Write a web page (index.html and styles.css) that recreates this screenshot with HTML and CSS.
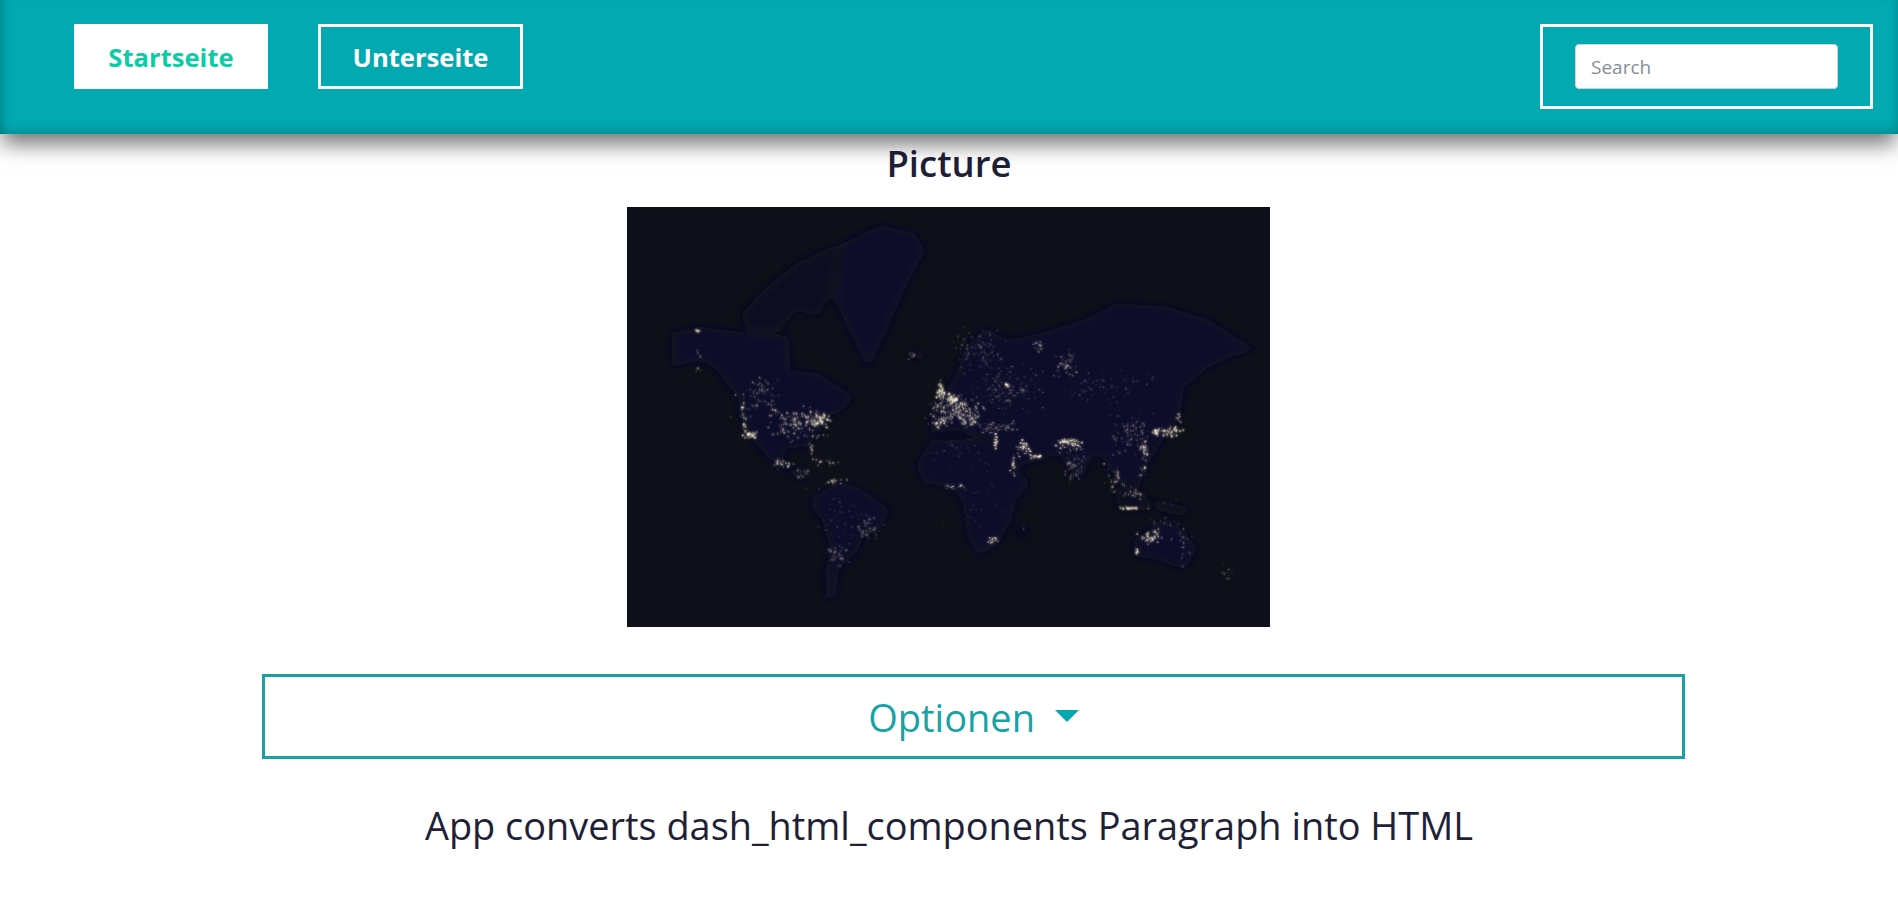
FILE: index.html
```html
<!DOCTYPE html>
<html lang="de">
<head>
    <meta charset="UTF-8">
    <meta name="viewport" content="width=device-width, initial-scale=1.0">
    <title>Startseite</title>
    <link rel="stylesheet" href="styles.css">
</head>
<body>
    <nav class="navbar">
        <div class="nav-links">
            <a class="nav-btn nav-btn-active" href="#">Startseite</a>
            <a class="nav-btn" href="#">Unterseite</a>
        </div>
        <form class="search-box">
            <input class="search-input" type="text" placeholder="Search">
        </form>
    </nav>

    <main class="content">
        <h3 class="picture-title">Picture</h3>

        <div class="picture">
            <!-- viewBox ist in den Koordinaten der Vorlage, nicht in Pixeln -->
            <svg id="world-map" viewBox="17 21 1527 1260" preserveAspectRatio="none" role="img" aria-label="World map at night">
                <defs>
                    <filter id="soft" x="-5%" y="-5%" width="110%" height="110%">
                        <feGaussianBlur stdDeviation="13"/>
                    </filter>
                    <filter id="glow" x="-5%" y="-5%" width="110%" height="110%">
                        <feGaussianBlur stdDeviation="3"/>
                    </filter>
                </defs>
                <rect x="17" y="21" width="1527" height="1260" fill="#0e1019"/>
                <g class="land" filter="url(#soft)">
                    <polygon points="125,400 190,380 280,395 310,400 400,410 405,510 470,520 520,560 555,590 530,630 495,650 470,690 450,740 455,755 440,740 400,745 385,770 395,800 430,815 450,840 435,845 395,815 350,770 310,710 285,640 280,590 230,510 190,480 125,500"/>
                    <polygon class="land-faint" points="290,340 340,270 420,190 520,130 500,280 470,350 420,330 380,390 300,390"/>
                    <polygon points="530,130 620,75 700,100 725,150 680,260 630,400 590,510 560,430 510,300"/>
                    <polygon class="land-faint" points="680,460 720,450 720,475 690,480"/>
                    <polygon points="460,890 520,845 560,860 600,890 640,930 620,980 580,1010 560,1060 520,1110 510,1210 490,1190 490,1100 500,1040 480,960 455,920"/>
                    <polygon points="705,790 740,720 840,720 900,730 930,790 975,850 940,900 930,960 900,1030 850,1070 825,1000 815,910 790,860 720,850"/>
                    <polygon class="land-faint" points="950,980 970,970 960,1020 945,1020"/>
                    <polygon points="740,640 760,600 800,520 820,440 870,385 920,420 1000,400 1100,360 1180,310 1300,320 1400,360 1510,450 1450,470 1400,500 1340,560 1330,650 1290,720 1250,800 1230,870 1180,840 1150,780 1130,750 1090,850 1040,760 1000,780 940,800 880,720 800,690 740,700"/>
                    <polygon class="land-faint" points="1170,860 1250,880 1260,930 1190,930"/>
                    <polygon class="land-faint" points="1270,900 1350,920 1340,950 1280,930"/>
                    <polygon points="1220,1020 1290,960 1340,990 1370,1050 1340,1110 1280,1080 1225,1070"/>
                </g>
                <g id="lights-glow" filter="url(#glow)"></g>
                <g id="lights"></g>
            </svg>
        </div>

        <button class="options-btn" type="button">Optionen <span class="caret"></span></button>

        <p class="info-text">App converts dash_html_components Paragraph into HTML</p>
    </main>

    <script src="map.js"></script>
</body>
</html>
```

FILE: styles.css
```css
body {
    margin: 0;
    background-color: #ffffff;
    color: #211f38;
    font-family: "Open Sans", "Noto Sans", sans-serif;
    overflow: hidden;
}

.navbar {
    display: flex;
    justify-content: space-between;
    align-items: flex-start;
    height: 134px;
    box-sizing: border-box;
    padding: 24px 25px 0 74px;
    background-color: #02a9b1;
    box-shadow: inset 0 -9px 14px -8px rgba(0, 0, 0, 0.22), inset 9px 0 10px -7px rgba(0, 0, 0, 0.2), inset -9px 0 10px -7px rgba(0, 0, 0, 0.1), 0 12px 20px -2px rgba(0, 0, 0, 0.55);
    position: relative;
}

.nav-links {
    display: flex;
    gap: 50px;
}

.nav-btn {
    display: block;
    height: 65px;
    box-sizing: border-box;
    padding-top: 1px;
    border: 3px solid #ffffff;
    color: #ffffff;
    font-size: 25.6px;
    font-weight: 700;
    line-height: 59px;
    text-align: center;
    text-decoration: none;
    width: 205px;
}

.nav-btn-active {
    width: 194px;
    background-color: #ffffff;
    color: #0bcda5;
}

.search-box {
    box-sizing: border-box;
    width: 333px;
    height: 85px;
    padding: 17px 32px;
    border: 3px solid #ffffff;
}

.search-input {
    display: block;
    width: 100%;
    height: 45px;
    box-sizing: border-box;
    padding: 6px 15px;
    border: 1px solid #ced4da;
    border-radius: 4px;
    font-family: inherit;
    font-size: 19px;
}

.search-input::placeholder {
    color: #868e96;
}

.content {
    text-align: center;
}

.picture-title {
    margin: 0;
    padding-top: 4px;
    height: 69px;
    box-sizing: border-box;
    font-size: 36.5px;
    font-weight: 600;
    line-height: 51px;
}

.picture {
    width: 643px;
    height: 420px;
    margin: 4px 0 0 627px;
}

.picture svg {
    display: block;
    width: 100%;
    height: 100%;
}

.land polygon {
    fill: #0f102b;
}

.land .land-faint {
    fill: #0e1021;
}

.options-btn {
    display: block;
    width: 1423px;
    height: 85px;
    margin: 47px 0 0 262px;
    box-sizing: border-box;
    border: 3px solid #17a2a6;
    background-color: #ffffff;
    color: #17a2a6;
    font-family: inherit;
    font-size: 38px;
    cursor: pointer;
}

.caret {
    display: inline-block;
    margin-left: 10px;
    vertical-align: 10px;
    border-top: 12px solid #02a9b1;
    border-left: 12px solid transparent;
    border-right: 12px solid transparent;
}

.info-text {
    margin: 40px 0 0;
    font-size: 37.9px;
    line-height: 52px;
}
```

FILE: map.js
```js
// Stadtlichter der Weltkarte, x/y wie im viewBox der Karte
// [x, y, streuung x, streuung y, anzahl, helligkeit]
const clusters = [
    [430, 670, 50, 40, 150, 0.8], [475, 660, 18, 14, 45, 0.9], [295, 650, 5, 40, 30, 0.9],
    [310, 705, 14, 7, 30, 1], [455, 745, 3, 12, 12, 0.8], [330, 600, 45, 45, 55, 0.6],
    [330, 555, 30, 20, 22, 0.6], [385, 790, 18, 10, 28, 0.8], [440, 822, 20, 14, 18, 0.6],
    [490, 790, 28, 9, 18, 0.7], [510, 845, 22, 6, 20, 0.8], [540, 950, 55, 75, 55, 0.4],
    [590, 985, 25, 25, 32, 0.7], [520, 1060, 25, 25, 30, 0.6], [185, 393, 4, 2, 5, 1],
    [190, 465, 5, 8, 4, 0.7], [185, 510, 5, 6, 4, 0.7], [690, 465, 12, 8, 9, 0.6],
    [765, 572, 8, 20, 42, 1], [790, 595, 14, 10, 38, 1], [800, 632, 42, 26, 160, 0.8],
    [760, 665, 20, 14, 42, 0.8], [830, 660, 14, 12, 30, 0.9], [850, 450, 40, 50, 100, 0.45],
    [920, 560, 55, 55, 160, 0.45], [918, 555, 4, 4, 10, 1], [1060, 490, 22, 28, 55, 0.6],
    [995, 435, 9, 14, 18, 0.7], [1150, 560, 75, 30, 85, 0.4], [890, 680, 42, 14, 62, 0.6],
    [892, 725, 3, 15, 18, 1], [960, 740, 11, 20, 35, 0.9], [990, 770, 14, 4, 15, 1],
    [1065, 730, 24, 10, 62, 0.9], [1080, 790, 22, 40, 62, 0.55], [935, 795, 5, 20, 18, 0.9],
    [1210, 700, 36, 42, 92, 0.55], [1245, 740, 6, 30, 30, 0.9], [1300, 695, 24, 10, 45, 1],
    [1325, 650, 4, 12, 8, 0.9], [1275, 695, 5, 8, 15, 1], [800, 760, 60, 30, 38, 0.4],
    [790, 860, 25, 6, 15, 0.7], [885, 1022, 9, 9, 15, 0.9], [860, 900, 55, 75, 38, 0.35],
    [1170, 840, 18, 30, 32, 0.7], [1220, 925, 28, 3, 28, 0.9], [1220, 880, 20, 15, 20, 0.7],
    [1245, 810, 7, 20, 12, 0.8], [1260, 1010, 18, 14, 45, 0.9], [1340, 1040, 20, 50, 25, 0.6],
    [1228, 1055, 3, 8, 8, 0.9], [1445, 1120, 11, 20, 12, 0.5], [1290, 970, 30, 10, 18, 0.5],
    [1310, 910, 30, 10, 8, 0.35], [960, 985, 6, 14, 6, 0.35]
];

// fester Startwert, damit das Bild immer gleich aussieht
let seed = 1234;
function rnd() {
    seed = (seed * 16807) % 2147483647;
    return seed / 2147483647;
}

function gauss() {
    return (rnd() + rnd() + rnd() - 1.5) / 0.75;
}

function addDot(group, x, y, r, opacity) {
    const dot = document.createElementNS('http://www.w3.org/2000/svg', 'ellipse');
    dot.setAttribute('cx', x);
    dot.setAttribute('cy', y);
    dot.setAttribute('rx', r * 2.4);
    dot.setAttribute('ry', r * 3);
    dot.setAttribute('fill', '#fdf0cf');
    dot.setAttribute('opacity', opacity);
    group.appendChild(dot);
}

const lights = document.getElementById('lights');
const glow = document.getElementById('lights-glow');
clusters.forEach(c => {
    for (let i = 0; i < c[4]; i++) {
        const x = c[0] + gauss() * c[2];
        const y = c[1] + gauss() * c[3];
        const r = 0.36 + rnd() * 0.6 * c[5];
        const opacity = (0.3 + rnd() * 0.7) * c[5];
        addDot(lights, x, y, r, opacity);
        addDot(glow, x, y, r * 1.5, opacity * 0.55);
    }
});
```
